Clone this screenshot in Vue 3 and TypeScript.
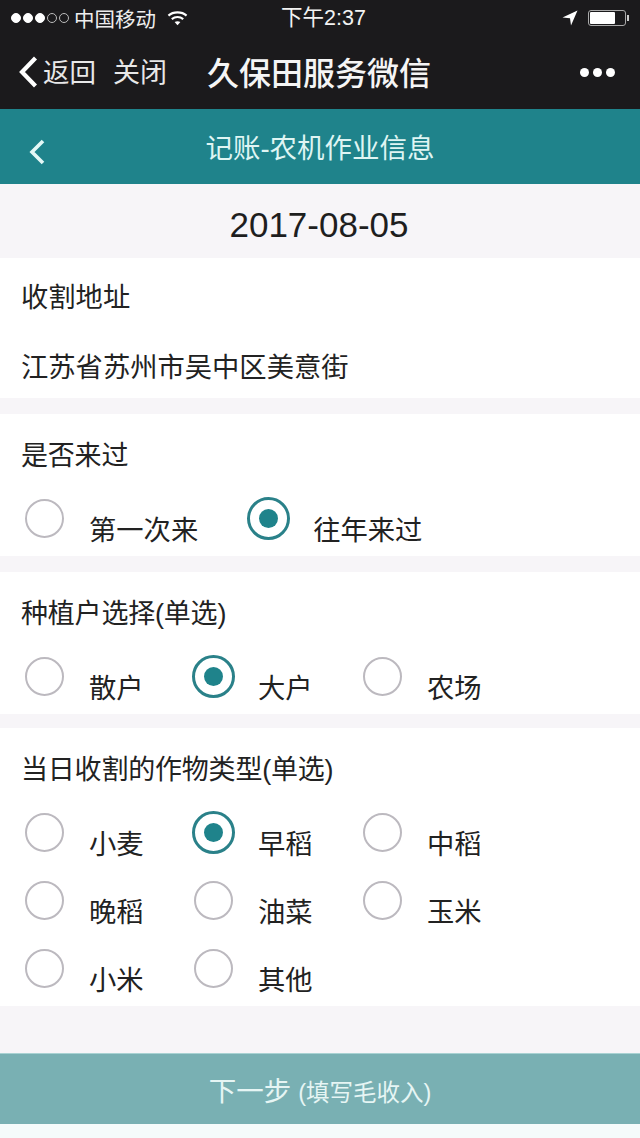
<script setup lang="ts">
interface Group {
  title: string;
  kind: string;
  options: { text: string; on?: boolean }[];
}

const groups: Group[] = [
  {
    title: "是否来过",
    kind: "loose",
    options: [{ text: "第一次来" }, { text: "往年来过", on: true }],
  },
  {
    title: "种植户选择(单选)",
    kind: "grid",
    options: [{ text: "散户" }, { text: "大户", on: true }, { text: "农场" }],
  },
  {
    title: "当日收割的作物类型(单选)",
    kind: "grid",
    options: [
      { text: "小麦" },
      { text: "早稻", on: true },
      { text: "中稻" },
      { text: "晚稻" },
      { text: "油菜" },
      { text: "玉米" },
      { text: "小米" },
      { text: "其他" },
    ],
  },
];
</script>

<template>
  <div class="page">
    <header class="wechat">
      <div class="status">
        <div class="status-left">
          <span class="dots">
            <i class="dot full"></i><i class="dot full"></i><i class="dot full"></i><i class="dot"></i><i class="dot"></i>
          </span>
          <span class="carrier">中国移动</span>
          <svg class="wifi" width="21" height="16" viewBox="0 0 22 16">
            <path d="M1.5 5.5C6.5 1 15.500 1 20.500 5.500" fill="none" stroke="#fff" stroke-width="2.200" />
            <path d="M5 9.200C8.500 6.300 13.500 6.300 17 9.200" fill="none" stroke="#fff" stroke-width="2.200" />
            <path d="M8 12.300C10 11 12 11 14 12.300L11 15.500Z" fill="#fff" />
          </svg>
        </div>
        <span class="time">下午2:37</span>
        <div class="status-right">
          <svg width="16" height="16" viewBox="0 0 16 16">
            <path d="M15.500 0.500L0.500 7.500L8 8.200L9 15.500Z" fill="#fff" />
          </svg>
          <div class="battery"><div class="level"></div></div>
          <div class="nub"></div>
        </div>
      </div>
      <div class="nav">
        <svg class="nav-back" width="22" height="34" viewBox="0 0 22 34">
          <path d="M18.500 3L5 17L18.500 31" fill="none" stroke="#fff" stroke-width="4.200" />
        </svg>
        <span class="nav-link back-label">返回</span>
        <span class="nav-link close-label">关闭</span>
        <span class="nav-title">久保田服务微信</span>
        <span class="more"><i></i><i></i><i></i></span>
      </div>
    </header>

    <div class="bar">
      <svg class="bar-back" width="18" height="28" viewBox="0 0 18 28">
        <path d="M15 3L4 14L15 25" fill="none" stroke="#e4f8f6" stroke-width="3.600" />
      </svg>
      <span class="bar-title">记账-农机作业信息</span>
    </div>

    <div class="date">2017-08-05</div>

    <section class="card address">
      <div class="label">收割地址</div>
      <div class="value">江苏省苏州市吴中区美意街</div>
    </section>

    <section v-for="group in groups" :key="group.title" class="card group">
      <div class="label">{{ group.title }}</div>
      <div class="options" :class="group.kind">
        <label v-for="opt in group.options" :key="opt.text" class="option">
          <span class="slot">
            <span class="radio" :class="{ on: opt.on }"></span>
          </span>
          <span class="option-text">{{ opt.text }}</span>
        </label>
      </div>
    </section>

    <button class="next">
      <span class="next-main">下一步</span>
      <span class="next-sub">(填写毛收入)</span>
    </button>
    <div class="foot"></div>
  </div>
</template>

<style>
html,
body {
  margin: 0;
  background: #f7f5f8;
}
</style>

<style scoped>
.page {
  width: 640px;
  height: 1138px;
  overflow: hidden;
  background: #f7f5f8;
  color: #222;
  font-family: "Liberation Sans", "Noto Sans CJK SC", sans-serif;
}
.wechat {
  height: 109px;
  background: #1b1a1c;
  color: #fff;
}
.status {
  height: 36px;
  display: flex;
  align-items: center;
  justify-content: space-between;
  padding: 0 11px 0 11px;
  position: relative;
}
.status-left,
.status-right {
  display: flex;
  align-items: center;
}
.dots {
  display: flex;
  gap: 2px;
  margin-right: 5px;
}
.dot {
  width: 10px;
  height: 10px;
  box-sizing: border-box;
  border-radius: 50%;
  border: 1px solid #bbb;
}
.dot.full {
  background: #fff;
  border-color: #fff;
}
.carrier {
  font-size: 20.500px;
  color: #eee;
}
.wifi {
  margin-left: 11px;
}
.time {
  position: absolute;
  left: 281px;
  top: 4px;
  font-size: 21.500px;
  line-height: 28px;
  color: #f2f2f2;
}
.status-right {
  gap: 10px;
}
.battery {
  width: 38px;
  height: 16px;
  box-sizing: border-box;
  padding: 1px;
  border: 1px solid #aaa;
  border-radius: 3px;
}
.level {
  width: 25px;
  height: 100%;
  background: #fff;
  border-radius: 1px;
}
.nub {
  width: 2px;
  height: 6px;
  background: #ccc;
  margin-left: -9px;
}
.nav {
  height: 73px;
  display: flex;
  align-items: center;
  position: relative;
  padding: 0 0 4px 17px;
  box-sizing: border-box;
}
.nav-back {
  margin-top: 2px;
}
.nav-link {
  font-size: 27px;
  color: #e8e8e8;
}
.back-label {
  margin-left: 4px;
  font-size: 26.500px;
}
.close-label {
  margin-left: 17px;
}
.nav-title {
  margin-left: 40px;
  font-size: 32px;
  font-weight: 500;
  color: #f5f5f5;
}
.more {
  position: absolute;
  right: 25px;
  top: 32px;
  display: flex;
  gap: 4px;
}
.more i {
  width: 9px;
  height: 9px;
  background: #fff;
  border-radius: 50%;
}
.bar {
  height: 75px;
  background: #1f838b;
  position: relative;
  display: flex;
  justify-content: center;
  padding-top: 21px;
  box-sizing: border-box;
}
.bar-back {
  position: absolute;
  left: 28px;
  top: 29px;
}
.bar-title {
  font-size: 27.500px;
  line-height: 38px;
  color: #dff5f3;
}
.date {
  height: 74px;
  line-height: 82px;
  padding-right: 2px;
  text-align: center;
  font-size: 35px;
  color: #1e1e1e;
}
.card {
  background: #fff;
  margin-bottom: 16px;
}
.label {
  padding: 20px 0 0 21px;
  font-size: 27.300px;
  line-height: 40px;
}
.group .label {
  padding-top: 22px;
  font-size: 27px;
  letter-spacing: -0.2px;
}
.address {
  height: 140px;
  box-sizing: border-box;
}
.value {
  padding: 30px 0 0 21px;
  font-size: 27.300px;
  line-height: 40px;
}
.options {
  display: flex;
  flex-wrap: wrap;
  row-gap: 9px;
  padding: 21px 0 0 23px;
}
.option {
  display: flex;
  height: 59px;
}
.grid .option {
  width: 169px;
}
.loose .option {
  margin-right: 49px;
}
.slot {
  width: 43px;
  height: 43px;
  display: flex;
  align-items: center;
  justify-content: center;
}
.radio {
  width: 39px;
  height: 39px;
  box-sizing: border-box;
  border: 2px solid #bcb9bf;
  border-radius: 50%;
  background: #fff;
}
.radio.on {
  width: 43px;
  height: 43px;
  border: 3px solid #2a8189;
  position: relative;
}
.radio.on::after {
  content: "";
  position: absolute;
  left: 9px;
  top: 9px;
  width: 19px;
  height: 19px;
  border-radius: 50%;
  background: #1f838b;
}
.option-text {
  margin-left: 23px;
  margin-top: 14px;
  font-size: 27.300px;
  line-height: 40px;
}
.group:last-of-type {
  margin-top: -2px;
}
.next {
  display: block;
  width: 100%;
  height: 71px;
  margin-top: 47px;
  border: none;
  border-top: 1px solid #a9d2d3;
  padding: 0;
  background: #79b0b3;
  color: #e6f5f4;
  font-family: inherit;
}
.next-main {
  font-size: 27.500px;
}
.next-sub {
  font-size: 23.500px;
  margin-left: 7px;
}
.foot {
  height: 14px;
  background: #f5fbfb;
}
</style>
